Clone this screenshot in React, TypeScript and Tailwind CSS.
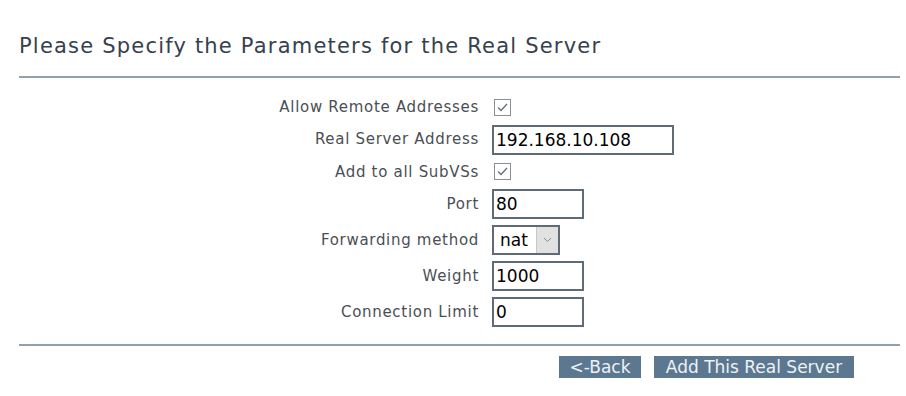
import React from 'react';

const label = "text-right text-[15px] tracking-[0.7px] text-[#4a4f55] pr-[13px] whitespace-nowrap";
const inputBase = "h-[30px] border-2 border-[#5f6b76] bg-white px-[2px] text-[17px] text-black outline-none font-['DejaVu_Sans',sans-serif]";

const Check = () => (
    <div className="w-[17px] h-[17px] border border-[#8a8f94] bg-white flex items-center justify-center">
        <svg width="11" height="9" viewBox="0 0 11 9" fill="none">
            <path d="M1 4.5 L4 7.5 L10 1" stroke="#6b6f73" strokeWidth="1.3" />
        </svg>
    </div>
);

export default function App() {
    return (
        <div className="w-[906px] h-[396px] bg-white font-['DejaVu_Sans',sans-serif] overflow-hidden">
            <div className="pl-[19px] pr-[6px]">
                <h1 className="pt-[32px] text-[21px] tracking-[1.2px] leading-[28px] text-[#36414d]">
                    Please Specify the Parameters for the Real Server
                </h1>
                <div className="mt-[16px] h-[2px] bg-[#8da3b4]" />

                <div className="grid grid-cols-[473px_auto] items-center gap-y-[6px] mt-[18px]">
                    <div className={label}>Allow Remote Addresses</div>
                    <div className="h-[20px] flex items-center pl-[2px]"><Check /></div>

                    <div className={label}>Real Server Address</div>
                    <input readOnly value="192.168.10.108" className={`${inputBase} w-[182px]`} />

                    <div className={label}>Add to all SubVSs</div>
                    <div className="h-[21px] flex items-center pl-[2px]"><Check /></div>

                    <div className={label}>Port</div>
                    <input readOnly value="80" className={`${inputBase} w-[92px]`} />

                    <div className={label}>Forwarding method</div>
                    <div className="h-[30px] w-[68px] border-2 border-[#5f6b76] flex bg-white">
                        <span className="flex-1 pl-[6px] text-[17px] leading-[26px] text-black">nat</span>
                        <span className="w-[22px] bg-[#e1e1e1] border-l border-[#c8c8c8] flex items-center justify-center">
                            <svg width="9" height="6" viewBox="0 0 9 6" fill="none">
                                <path d="M1 1 L4.5 4.5 L8 1" stroke="#8a8a8a" strokeWidth="1" />
                            </svg>
                        </span>
                    </div>

                    <div className={label}>Weight</div>
                    <input readOnly value="1000" className={`${inputBase} w-[92px]`} />

                    <div className={label}>Connection Limit</div>
                    <input readOnly value="0" className={`${inputBase} w-[92px]`} />
                </div>

                <div className="mt-[17px] h-[2px] bg-[#8da3b4]" />

                <div className="flex justify-end gap-[13px] mt-[10px] pr-[46px]">
                    <button className="h-[22px] w-[82px] bg-[#5b7890] text-[#eef2f5] text-[17px] leading-[22px]">&lt;-Back</button>
                    <button className="h-[22px] w-[200px] bg-[#5b7890] text-[#eef2f5] text-[17px] leading-[22px]">Add This Real Server</button>
                </div>
            </div>
        </div>
    );
}
